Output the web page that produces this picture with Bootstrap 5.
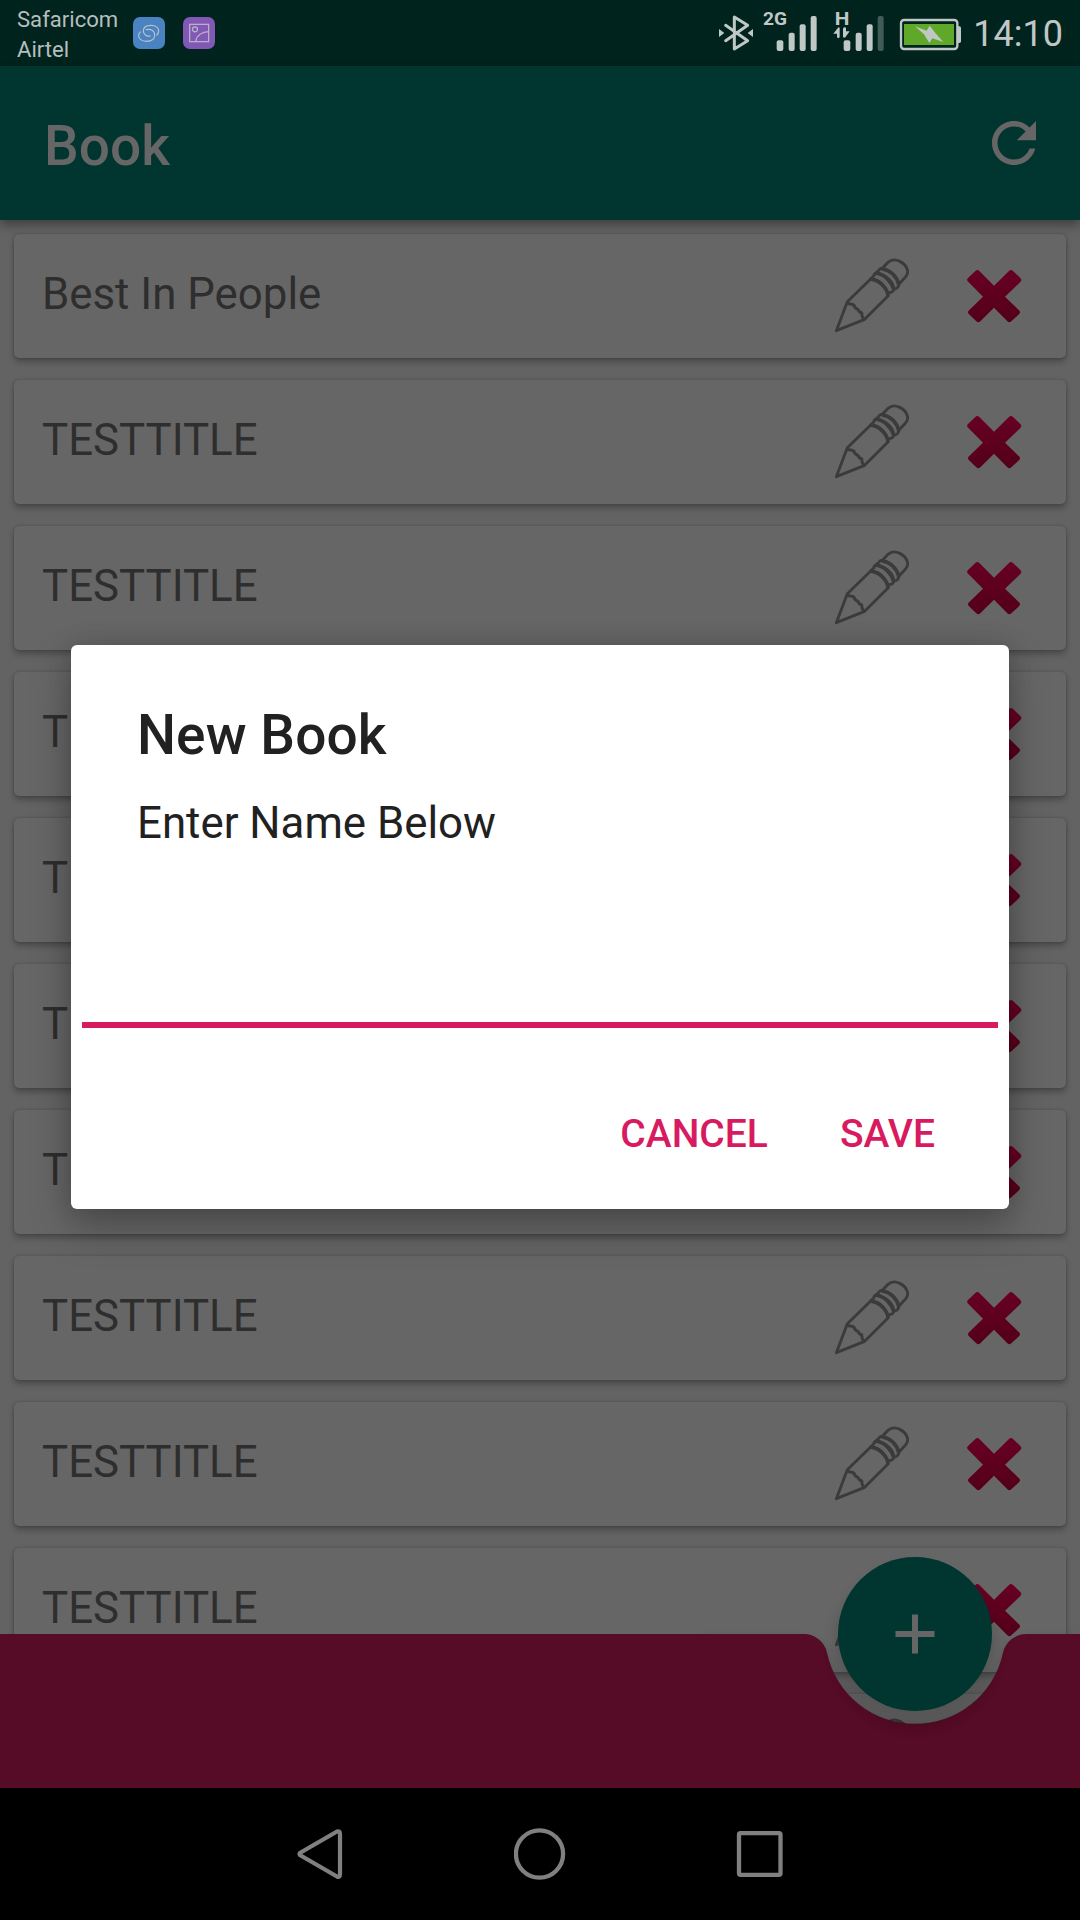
<!DOCTYPE html>
<html lang="en">
<head>
<meta charset="utf-8">
<meta name="viewport" content="width=device-width, initial-scale=1">
<title>Book</title>
<link href="https://cdn.jsdelivr.net/npm/bootstrap@5.3.0/dist/css/bootstrap.min.css" rel="stylesheet">
<style>
  body { font-family: Roboto, "Liberation Sans", sans-serif; background: #000; margin: 0; }
  svg { display: block; flex: none; }
  .phone { width: 1080px; height: 1920px; background: #636363; }
  .status { height: 66px; background: #00231e; color: #b6bfbd; padding-left: 17px; padding-right: 17px; flex: none; }
  .carrier { font-size: 22.1px; line-height: 30px; width: 116px; padding-top: 2px; }
  .clock { font-size: 36px; line-height: 66px; margin-left: 10px; padding-top: 2px; color: #c0c8c6; }
  .appbar { height: 154px; background: #003530; padding: 0 43px 0 44px; flex: none; z-index: 2; box-shadow: 0 5px 10px rgba(0,0,0,.36); }
  .appbar-title { font-size: 55px; font-weight: 500; line-height: 64px; color: #666; margin: 6px 0 0; }
  .book-list { flex: 1 1 0; min-height: 0; padding: 14px 14px 0; gap: 22px; }
  .book-item { height: 124px; flex: none; border-radius: 5px; background: #666; padding: 0 43px 0 28px; box-shadow: 0 4px 6px rgba(0,0,0,.26), 0 0 3px rgba(0,0,0,.2); }
  .book-name { font-size: 43.8px; line-height: 52px; color: #2e2e2e; margin-bottom: 5px; }
  .pencil { margin-bottom: 2px; margin-right: 55px; }
  .bottombar { left: 0; bottom: 132px; height: 260px; width: 1080px; z-index: 3; }
  .softkeys { height: 132px; flex: none; background: #000; padding: 0 296px; z-index: 4; }
  .scrim { top: 66px; bottom: 132px; z-index: 5; }
  .dialog-box { width: 938px; height: 564px; background: #fff; border-radius: 6px; color: #212121; box-shadow: 0 18px 42px rgba(0,0,0,.26), 0 0 24px rgba(0,0,0,.14); padding: 57px 11px 0; }
  .dialog-title { font-size: 55px; font-weight: 500; line-height: 66px; margin: 0 0 0 55px; letter-spacing: .1px; }
  .dialog-text { font-size: 43.8px; line-height: 52px; margin: 29px 0 0 55px; }
  .dialog-field { height: 155px; margin-top: 24px; border: 0; border-bottom: 6px solid #d81b60; border-radius: 0; background: transparent; padding: 0 0 30px 4px; font-size: 44px; }
  .dialog-field:focus { box-shadow: none; }
  .dialog-actions { margin: 73px 63px 0 0; gap: 72px; }
  .dialog-actions .btn { font-size: 39px; line-height: 66px; font-weight: 500; color: #d81b60; padding: 0; border: 0; }
</style>
</head>
<body>
<svg width="0" height="0" class="position-absolute" aria-hidden="true">
  <defs>
    <linearGradient id="redfade" x1="0" y1="0" x2="0" y2="1"><stop offset="0" stop-color="#680023"/><stop offset="1" stop-color="#530019"/></linearGradient>
    <symbol id="i-pencil" viewBox="102 108 228 234">
      <g fill="none" stroke="#3b3b3b" stroke-width="8.5" stroke-linejoin="round" stroke-linecap="round">
        <path d="M109 332 L142 245 L212 177 C238 178 262 201 264 228 L194 298 Z"/>
        <path d="M143 250 C150 253 156 250 162 256 C164 264 168 266 174 268 C176 275 179 277 185 278 C185 286 187 292 191 297" stroke-width="9"/>
        <path d="M212 177 L222 167 C221 162 226 159 231 160 C258 163 281 186 281 208 C281 214 275 218 269 217 L264 222"/>
        <path d="M228 159 L238 149 C240 145 245 144 250 147 C275 152 293 173 296 193 C296 201 291 207 283 206"/>
        <path d="M248 144 L264 127 C286 108 317 131 322 149 C325 160 322 166 316 172 L299 190"/>
        <path d="M215 178 C238 182 261 203 264 226 M231 160 C254 164 276 187 281 208 M248 147 C270 151 290 168 296 193" stroke-width="10.5"/>
      </g>
    </symbol>
    <symbol id="i-cross" viewBox="495 144 174 168">
      <path d="M503 184 Q499 179 504 174 L526 153 Q532 147 538 153 L582 197 L627 153 Q633 147 639 153 L661 174 Q667 180 661 186 L615 230 L657 271 Q663 277 657 283 L634 304 Q628 310 622 304 L582 263 L541 304 Q535 310 529 304 L507 283 Q501 277 507 271 L549 230 Z" fill="url(#redfade)"/>
    </symbol>
  </defs>
</svg>

<div class="phone d-flex flex-column position-relative overflow-hidden">
  <header class="status d-flex align-items-center">
    <div class="carrier"><div>Safaricom</div><div>Airtel</div></div>
    <svg width="32" height="32" viewBox="0 0 96 96">
      <rect width="96" height="96" rx="21" fill="#4a83c1"/>
      <g fill="none" stroke="#b7c2c9" stroke-width="3.6" stroke-linecap="round">
        <path d="M40 38 C54 34 65 42 65 54 C65 67 54 73 40 73 C26 73 17 65 17 56 C17 51 19 47 22 45"/>
        <path d="M52 57 C40 60 31 51 31 42 C31 30 42 25 54 25 C68 25 77 32 77 41 C77 46 75 51 71 54"/>
      </g>
    </svg>
    <svg class="ms-3" width="36" height="32" viewBox="-6 0 108 96">
      <rect width="96" height="96" rx="21" fill="#8158b4"/>
      <g fill="none" stroke="#bdb6cc" stroke-width="3.6">
        <rect x="20" y="22" width="57" height="52"/><circle cx="36" cy="37" r="7.5"/><path d="M38 73 C41 56 56 44 77 44"/>
      </g>
    </svg>
    <svg class="ms-auto" width="245" height="66" viewBox="54 0 735 198">
      <g fill="none" stroke="#c0c8c6" stroke-width="9" stroke-linejoin="round" stroke-linecap="round">
        <path d="M77 76 L143 122 L103 147 V51 L143 76 L77 122"/>
      </g>
      <g fill="#c0c8c6">
        <path d="M57 87 L73 99 L57 111 Z M159 87 L143 99 L159 111 Z"/>
        <text x="189" y="74" font-family="Roboto, sans-serif" font-weight="700" font-size="57" textLength="72" lengthAdjust="spacingAndGlyphs">2G</text>
        <rect x="230" y="121" width="20" height="32" rx="6"/><rect x="266" y="98" width="18" height="55" rx="6"/><rect x="299" y="73" width="18" height="80" rx="6"/><rect x="332" y="48" width="18" height="105" rx="6"/>
        <text x="404" y="74" font-family="Roboto, sans-serif" font-weight="700" font-size="57" textLength="44" lengthAdjust="spacingAndGlyphs">H</text>
        <path d="M400 101 L414 83 Q419 80 419 86 V112 Q415 117 411 112 V101 Z M449 95 H439 V108 Q433 117 429 110 V86 Q432 80 438 83 V95 Z M438 94 H449 L435 113 Z"/>
        <rect x="431" y="121" width="20" height="32" rx="6"/><rect x="467" y="98" width="18" height="55" rx="6"/><rect x="500" y="73" width="18" height="80" rx="6"/>
        <rect x="533" y="48" width="18" height="105" rx="6" fill="#415b56"/>
        <path d="M774 79 H778 Q783 79 783 84 V124 Q783 129 778 129 H774 Z"/>
      </g>
      <rect x="603" y="60" width="169" height="87" rx="9" fill="#00231e" stroke="#c0c8c6" stroke-width="7"/>
      <rect x="612" y="72" width="150" height="63" fill="#60a829"/>
      <path d="M645 79 L680 92 L689 77 L706 99 L730 126 L697 115 L688 129 L672 103 Z" fill="#c0c8c6"/>
    </svg>
    <div class="clock">14:10</div>
  </header>

  <nav class="appbar d-flex align-items-center justify-content-between">
    <h1 class="appbar-title">Book</h1>
    <svg width="46" height="46" viewBox="3.64 3.64 16.72 16.72" fill="#666"><path d="M17.65 6.35C16.2 4.9 14.21 4 12 4c-4.42 0-7.99 3.58-7.99 8s3.57 8 7.99 8c3.73 0 6.84-2.55 7.73-6h-2.08c-.82 2.33-3.04 4-5.65 4-3.31 0-6-2.69-6-6s2.69-6 6-6c1.66 0 3.14.69 4.22 1.78L13 11h7V4l-2.35 2.35z"/></svg>
  </nav>

  <main class="book-list d-flex flex-column overflow-hidden" id="books"></main>

  <svg class="bottombar position-absolute" viewBox="0 -106 1080 260">
    <defs>
      <filter id="soft" x="-30%" y="-30%" width="160%" height="160%"><feGaussianBlur stdDeviation="7"/></filter>
      <filter id="edge" x="-5%" y="-20%" width="110%" height="140%"><feGaussianBlur stdDeviation="4"/></filter>
    </defs>
    <path d="M700 4 H803.6 A24 24 0 0 1 827 19 A90 90 0 0 0 1003 19 A24 24 0 0 1 1026.4 4 H1080 V154 H700Z" fill="#000" opacity=".12" filter="url(#edge)"/>
    <path d="M0 0 H803.6 A24 24 0 0 1 827.05 18.95 A90 90 0 0 0 1002.95 18.95 A24 24 0 0 1 1026.4 0 H1080 V154 H0 Z" fill="#560b26"/>
    <circle cx="915" cy="13" r="80" fill="#000" opacity=".15" filter="url(#soft)"/>
    <circle cx="915" cy="0" r="77" fill="#003530"/>
    <path d="M912 -19.5 h6 v16.5 h16.5 v6 h-16.5 v16.5 h-6 v-16.5 h-16.5 v-6 h16.5z" fill="#666"/>
  </svg>

  <footer class="softkeys d-flex align-items-center justify-content-between">
    <svg width="48" height="54" viewBox="296 1827 48 54"><path d="M299.8 1853 L337 1831.5 Q340 1830.5 340 1834 V1874 Q340 1878 337 1876.5 L299.8 1855 Q299 1854 299.8 1853Z" fill="none" stroke="#808080" stroke-width="4.2" stroke-linejoin="round"/></svg>
    <svg width="52" height="54" viewBox="0 0 52 54"><circle cx="25.5" cy="27" r="23.6" fill="none" stroke="#808080" stroke-width="4.3"/></svg>
    <svg width="48" height="54" viewBox="0 0 48 54"><rect x="3" y="6.2" width="41.5" height="41.6" rx="1.5" fill="none" stroke="#808080" stroke-width="4.3"/></svg>
  </footer>

  <div class="scrim position-absolute start-0 w-100 d-flex align-items-center justify-content-center">
    <section class="dialog-box d-flex flex-column" role="dialog" aria-label="New Book">
      <h2 class="dialog-title">New Book</h2>
      <p class="dialog-text">Enter Name Below</p>
      <input class="form-control dialog-field" type="text" aria-label="Name">
      <div class="dialog-actions d-flex justify-content-end">
        <button type="button" class="btn">CANCEL</button>
        <button type="button" class="btn">SAVE</button>
      </div>
    </section>
  </div>
</div>

<script>
  const titles = ["Best In People", ...Array(10).fill("TESTTITLE")];
  document.getElementById("books").innerHTML = titles.map(t => `
    <article class="book-item d-flex align-items-center">
      <span class="book-name me-auto">${t}</span>
      <svg class="pencil" width="76" height="78"><use href="#i-pencil"/></svg>
      <svg width="58" height="56"><use href="#i-cross"/></svg>
    </article>`).join("");
</script>
<script src="https://cdn.jsdelivr.net/npm/bootstrap@5.3.0/dist/js/bootstrap.bundle.min.js"></script>
</body>
</html>
